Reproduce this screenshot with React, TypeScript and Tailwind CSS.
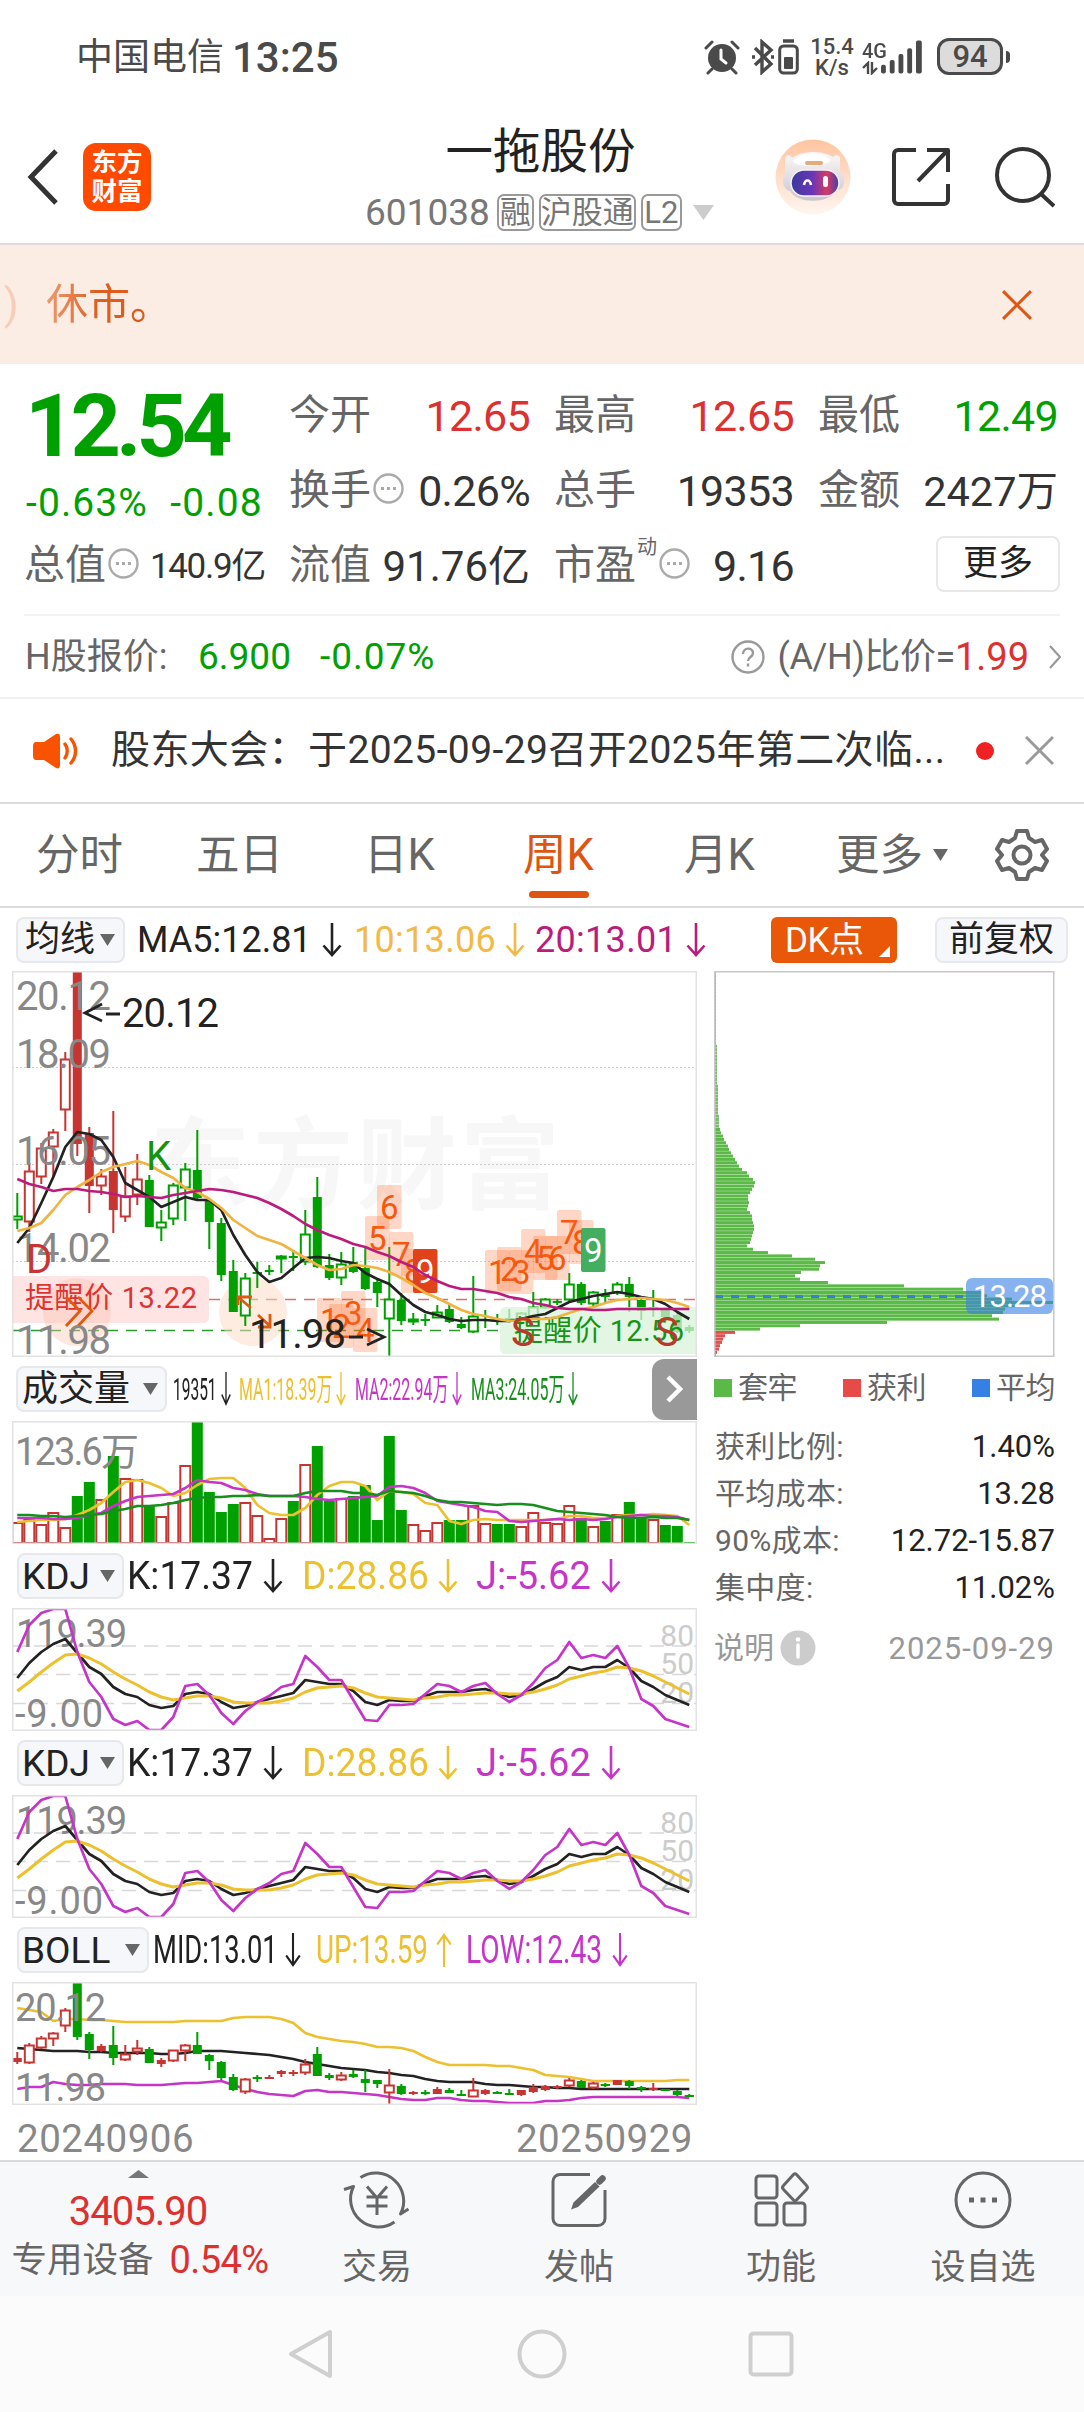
import type { ReactNode } from "react";
import clsx from "clsx";

// h = high, t = body top, b = body bottom, l = low (px from the top of the pane)
type Candle = [h: number, t: number, b: number, l: number, kind: "r" | "R" | "g" | "G"];

const RED = "#c73532";
const GREEN = "#00a000";
const UP = "#c435c8";
const GOLD = "#ecc02e";
const STEP = 12;
const PANE_W = 685;

const WEEKLY: Candle[] = [
  [222, 245, 249, 258, "g"], [192, 200, 251, 261, "r"], [172, 177, 206, 213, "r"], [158, 161, 176, 206, "r"],
  [81, 88, 139, 160, "r"], [0, 0, 173, 185, "R"], [156, 162, 215, 242, "R"], [198, 205, 215, 224, "r"],
  [140, 200, 239, 262, "R"], [196, 225, 246, 251, "r"], [183, 208, 224, 234, "r"], [204, 209, 256, 256, "G"],
  [239, 251, 257, 270, "g"], [212, 214, 248, 254, "g"], [192, 198, 217, 250, "g"], [159, 199, 227, 228, "G"],
  [227, 230, 251, 278, "G"], [247, 252, 304, 310, "G"], [289, 300, 341, 341, "G"], [302, 307, 345, 355, "g"],
  [291, 301, 302, 317, "G"], [294, 299, 301, 304, "G"], [284, 285, 288, 302, "g"], [279, 285, 287, 300, "G"],
  [239, 263, 291, 294, "g"], [206, 226, 296, 297, "G"], [283, 294, 307, 309, "G"], [281, 293, 307, 314, "g"],
  [276, 291, 301, 302, "G"], [276, 297, 318, 319, "G"], [308, 311, 322, 336, "G"], [276, 328, 348, 386, "g"],
  [322, 329, 350, 354, "G"], [342, 348, 351, 354, "g"], [343, 348, 349, 355, "G"], [334, 341, 347, 347, "g"],
  [334, 338, 351, 352, "G"], [346, 353, 357, 358, "G"], [305, 345, 361, 362, "g"], [339, 348, 350, 357, "G"],
  [343, 348, 349, 354, "G"], [338, 347, 349, 352, "G"], [341, 342, 352, 354, "g"], [321, 336, 346, 346, "g"],
  [327, 328, 337, 338, "g"], [328, 330, 331, 334, "G"], [302, 313, 329, 330, "g"], [311, 313, 332, 334, "G"],
  [320, 321, 333, 335, "g"], [318, 323, 326, 332, "G"], [311, 313, 322, 324, "g"], [306, 313, 326, 341, "G"],
  [327, 329, 340, 349, "G"], [319, 336, 337, 346, "G"], [337, 339, 346, 352, "G"], [342, 344, 361, 362, "G"],
  [354, 356, 360, 362, "G"],
];

const MA5 = [272, 257, 232, 206, 176, 161, 163, 169, 186, 212, 219, 226, 236, 231, 226, 229, 229, 239, 264, 284, 301, 311, 307, 297, 287, 286, 287, 290, 292, 302, 308, 313, 324, 334, 341, 344, 348, 350, 349, 349, 350, 350, 348, 345, 343, 337, 331, 328, 325, 323, 321, 323, 326, 328, 333, 341, 348];
const MA10 = [260, 257, 252, 239, 224, 216, 209, 201, 196, 193, 190, 194, 201, 207, 217, 221, 228, 237, 249, 257, 265, 269, 273, 280, 287, 294, 299, 298, 294, 295, 297, 301, 307, 314, 322, 327, 333, 339, 343, 345, 348, 350, 349, 348, 348, 346, 342, 338, 336, 332, 329, 328, 327, 328, 329, 332, 336];
const MA20 = [208, 213, 216, 220, 218, 218, 220, 221, 223, 226, 225, 226, 227, 224, 222, 220, 218, 219, 221, 224, 227, 232, 238, 245, 253, 259, 264, 268, 273, 276, 281, 285, 291, 296, 304, 310, 315, 318, 318, 320, 322, 326, 328, 332, 334, 337, 338, 338, 339, 339, 338, 338, 338, 338, 338, 338, 338];

// "r" is an up week drawn hollow, "G" a down week
const VOLUME =
  "101r 97r 103r 91r 106r 75G 61G 78r 35G 57r 58r 84G 95r 81r 44r 0G 71G 91G 83G 81r 94r 117r 97r 80G 43r 25G 80G 77r 75G 64G 99G 15G 89G 103r 109r 101r 99G 99G 84r 102r 103G 103G 105r 91r 101r 102r 84r 97G 105r 100G 93r 81G 97G 98r 104G 105G 121G".split(" ");
const VOL_MA1 = [101, 100, 99, 99, 98, 94, 89, 82, 71, 61, 59, 62, 67, 75, 72, 64, 58, 57, 57, 67, 84, 92, 94, 94, 87, 74, 65, 61, 61, 65, 79, 70, 71, 73, 82, 84, 100, 103, 99, 98, 99, 99, 99, 99, 99, 98, 95, 95, 97, 97, 95, 94, 94, 93, 94, 95, 104];
const VOL_MA2 = [97, 97, 97, 98, 98, 97, 94, 92, 85, 80, 76, 75, 74, 73, 67, 59, 61, 62, 67, 69, 73, 75, 75, 75, 76, 78, 79, 78, 77, 76, 75, 66, 65, 67, 72, 80, 82, 84, 86, 90, 91, 100, 101, 100, 99, 98, 99, 98, 99, 98, 96, 95, 94, 95, 95, 96, 99];
const VOL_MA3 = [94, 94, 95, 95, 96, 95, 94, 93, 90, 88, 85, 85, 84, 82, 79, 77, 76, 76, 75, 75, 74, 75, 75, 75, 72, 70, 70, 70, 72, 72, 74, 70, 71, 72, 75, 79, 81, 81, 82, 83, 84, 83, 83, 84, 87, 90, 91, 92, 93, 94, 96, 97, 97, 96, 97, 97, 99];

const KDJ_J = [44, 17, 5, 1, 1, 44, 74, 89, 111, 117, 113, 122, 122, 109, 78, 76, 87, 105, 116, 103, 94, 88, 79, 76, 48, 59, 72, 72, 92, 112, 113, 97, 97, 96, 86, 76, 78, 84, 78, 75, 86, 94, 87, 75, 60, 52, 34, 50, 47, 50, 38, 60, 91, 98, 111, 115, 119];
const KDJ_K = [70, 55, 44, 36, 31, 45, 59, 66, 79, 86, 89, 97, 100, 98, 86, 84, 86, 94, 100, 98, 94, 91, 88, 85, 72, 74, 76, 76, 83, 94, 97, 92, 93, 93, 88, 84, 84, 84, 82, 81, 85, 89, 87, 81, 74, 69, 59, 62, 59, 59, 52, 60, 73, 79, 87, 92, 97];
const KDJ_D = [83, 74, 64, 55, 47, 46, 50, 56, 64, 71, 77, 84, 89, 92, 90, 88, 88, 90, 94, 95, 95, 95, 93, 90, 84, 80, 79, 78, 80, 85, 89, 90, 91, 92, 90, 89, 87, 87, 86, 85, 85, 86, 86, 84, 81, 77, 71, 68, 65, 63, 59, 60, 63, 68, 74, 80, 86];

const BOLL: Candle[] = [
  [70, 76, 80, 82, "R"], [61, 63, 81, 82, "r"], [54, 56, 66, 67, "r"], [50, 51, 57, 64, "r"],
  [26, 28, 44, 50, "r"], [0, 0, 55, 58, "G"], [50, 52, 68, 77, "G"], [62, 64, 69, 70, "R"],
  [44, 63, 76, 83, "G"], [63, 72, 78, 79, "r"], [58, 66, 70, 73, "r"], [65, 67, 81, 81, "G"],
  [76, 78, 82, 85, "R"], [68, 68, 79, 80, "r"], [62, 63, 69, 79, "r"], [50, 63, 72, 72, "G"],
  [72, 73, 79, 88, "G"], [79, 80, 96, 98, "G"], [92, 95, 108, 109, "G"], [96, 97, 110, 112, "r"],
  [93, 95, 96, 100, "G"], [93, 95, 96, 97, "R"], [88, 89, 92, 95, "R"], [88, 90, 91, 94, "R"],
  [77, 82, 91, 93, "r"], [65, 72, 94, 94, "G"], [91, 93, 96, 98, "G"], [90, 93, 98, 99, "r"],
  [88, 92, 95, 96, "G"], [88, 97, 101, 110, "G"], [98, 98, 102, 106, "G"], [87, 103, 111, 123, "r"],
  [102, 104, 112, 113, "G"], [109, 110, 112, 113, "R"], [108, 110, 112, 113, "G"], [105, 107, 112, 112, "R"],
  [106, 108, 111, 111, "G"], [108, 112, 113, 113, "G"], [96, 108, 115, 115, "r"], [107, 108, 112, 113, "R"],
  [109, 110, 111, 111, "G"], [107, 111, 113, 113, "G"], [108, 108, 113, 114, "R"], [102, 105, 110, 111, "R"],
  [103, 104, 108, 109, "R"], [103, 104, 106, 107, "R"], [96, 98, 104, 105, "r"], [98, 99, 106, 106, "G"],
  [100, 101, 106, 107, "r"], [101, 102, 103, 105, "G"], [98, 98, 103, 103, "R"], [98, 99, 104, 107, "G"],
  [104, 105, 107, 110, "G"], [101, 106, 108, 109, "R"], [107, 107, 108, 109, "G"], [108, 109, 113, 114, "G"],
  [112, 113, 114, 115, "G"],
];
const BOLL_UP = [26, 28, 30, 39, 37, 37, 38, 38, 39, 40, 40, 40, 40, 40, 39, 39, 39, 39, 36, 35, 35, 35, 37, 41, 51, 55, 57, 59, 60, 62, 65, 65, 66, 69, 75, 80, 83, 83, 83, 83, 84, 84, 86, 88, 93, 94, 95, 97, 99, 99, 99, 99, 99, 99, 99, 98, 98];
const BOLL_MID = [66, 67, 68, 69, 69, 69, 70, 70, 71, 71, 71, 71, 72, 72, 71, 69, 69, 69, 70, 71, 72, 73, 75, 77, 80, 82, 84, 86, 87, 88, 90, 91, 93, 94, 97, 99, 100, 100, 100, 102, 103, 103, 104, 105, 105, 106, 106, 107, 107, 107, 107, 107, 107, 107, 107, 107, 107];
const BOLL_LOW = [107, 105, 105, 100, 102, 103, 103, 102, 102, 102, 103, 103, 103, 102, 101, 101, 100, 99, 103, 107, 110, 112, 113, 114, 109, 108, 110, 110, 111, 112, 113, 115, 117, 118, 118, 116, 116, 118, 119, 119, 120, 121, 121, 121, 119, 119, 118, 116, 115, 115, 115, 115, 115, 115, 115, 115, 116];

// Cost distribution, one width per price level from the top
const CHIPS = [
  ...Array(22).fill(1), ...Array(12).fill(2), ...Array(9).fill(3), 4, 4, 4, 4, 5,
  6, 8, 9, 11, 13, 14, 16, 18, 20, 22, 24, 27, 32, 34, 38, 40, 39, 37, 35, 33, 33, 34, 33, 32, 35, 37, 37,
  38, 39, 39, 38, 37, 36, 35, 32, 38, 53, 77, 100, 110, 105, 104, 86, 80, 85, 113, 189, 248, 267, 272, 297,
  339, 300, 290, 288, 277, 284, 172, 85, 45,
];
const CHIPS_WIN = [20, 10, 8, 7, 5, 4, 2, 1];

const TAGS: { n: string; x: number; y: number; solid?: string }[] = [
  { n: "1", x: 305, y: 327 }, { n: "2", x: 317, y: 333 }, { n: "3", x: 329, y: 320 }, { n: "4", x: 341, y: 337 },
  { n: "5", x: 353, y: 245 }, { n: "6", x: 365, y: 214 }, { n: "7", x: 377, y: 261 }, { n: "8", x: 389, y: 278 },
  { n: "9", x: 401, y: 278, solid: "#e2421b" },
  { n: "1", x: 473, y: 279 }, { n: "2", x: 485, y: 276 }, { n: "3", x: 497, y: 279 }, { n: "4", x: 509, y: 258 },
  { n: "5", x: 521, y: 265 }, { n: "6", x: 533, y: 265 }, { n: "7", x: 545, y: 239 }, { n: "8", x: 557, y: 249 },
  { n: "9", x: 569, y: 257, solid: "#43ae60" },
];

const cx = (i: number) => 5.3 + i * STEP;

function Line({ data, color, w = 2.7 }: { data: number[]; color: string; w?: number }) {
  return (
    <polyline
      points={data.map((y, i) => `${cx(i)},${y}`).join(" ")}
      fill="none"
      stroke={color}
      strokeWidth={w}
      strokeLinejoin="round"
    />
  );
}

function Candles({ data }: { data: Candle[] }) {
  return (
    <g>
      {data.map(([h, t, b, l, kind], i) => {
        const color = kind.toLowerCase() === "r" ? RED : GREEN;
        const hollow = kind === "r" || kind === "g";
        const x = cx(i);
        return (
          <g key={i} stroke={color} strokeWidth="2">
            <path d={`M${x} ${h}V${t}M${x} ${b}V${l}`} />
            {hollow ? (
              <rect x={x - 4.5} y={t + 0.5} width="9" height={Math.max(b - t - 1, 1.5)} fill="white" />
            ) : (
              <rect x={x - 4.5} y={t} width="9" height={Math.max(b - t, 1.5)} fill={color} stroke="none" />
            )}
            {!hollow && b - t < 2 && <path d={`M${x - 4.5} ${t + 1}h9`} />}
          </g>
        );
      })}
    </g>
  );
}

function Pane({ h, children }: { h: number; children: ReactNode }) {
  return (
    <svg
      width={PANE_W}
      height={h}
      viewBox={`0 0 ${PANE_W} ${h}`}
      className="ml-3 block shrink-0 font-[Roboto,'Noto_Sans_CJK_SC',sans-serif]"
    >
      {children}
      <rect x="0.75" y="0.75" width={PANE_W - 1.5} height={h - 1.5} fill="none" stroke="#e2e2e2" strokeWidth="1.5" />
    </svg>
  );
}

function AxisText({ x, y, w, fill = "#888", size = 40, children }: { x: number; y: number; w: number; fill?: string; size?: number; children: string }) {
  return (
    <text x={x} y={y} fontSize={size} textLength={w} fill={fill}>
      {children}
    </text>
  );
}

function Arrow({ up, className }: { up?: boolean; className?: string }) {
  return (
    <svg viewBox="0 0 20 34" preserveAspectRatio="none" className={clsx("h-[34px] shrink-0", up && "rotate-180", className)} fill="none" stroke="currentColor" strokeWidth="2.6">
      <path d="M10 0V32M1.5 22.5 10 32l8.5-9.5" />
    </svg>
  );
}

function Readout({ text, className, box, fit, arrow = "w-5", up }: { text: string; className: string; box: string; fit?: string; arrow?: string; up?: boolean }) {
  return (
    <div className={clsx("flex shrink-0 items-center", className)}>
      <div className={clsx("shrink-0 whitespace-nowrap", box)}>
        <div className={clsx("origin-left", fit)}>{text}</div>
      </div>
      <Arrow up={up} className={arrow} />
    </div>
  );
}

function Picker({ label, className }: { label: string; className: string }) {
  return (
    <div className={clsx("flex h-[46px] shrink-0 items-center justify-between rounded-lg border-2 border-[#e6e8ec] bg-[#f6f7fa] text-[#222]", className)}>
      <span className="whitespace-nowrap">{label}</span>
      <svg width="15" height="12" viewBox="0 0 15 12" className="shrink-0"><path d="M0 0h15L7.5 12z" fill="#666" /></svg>
    </div>
  );
}

function StatusBar() {
  return (
    <header className="flex h-[113px] items-center pr-[74px] pl-[76px] text-[#4a4a4a]">
      <span className="pt-[2px] text-[37px]">中国电信</span>
      <span className="ml-2 pt-[3px] text-[42px] font-medium">13:25</span>
      <div className="ml-auto flex items-center">
        <svg width="36" height="36" viewBox="0 0 36 36" fill="none" stroke="#4a4a4a" strokeWidth="3" strokeLinecap="round">
          <circle cx="18" cy="19" r="14" fill="#4a4a4a" stroke="none" />
          <path d="M2 9 8 3M34 9l-6-6M8 30l-4 4M28 30l4 4" />
          <path d="M17 11v9l5 4" stroke="white" />
        </svg>
        <svg width="22" height="36" viewBox="0 0 22 36" className="ml-[12px]" fill="none" stroke="#4a4a4a" strokeWidth="3.4">
          <path d="M3 9l16 16-9 8V3l9 8L3 26" />
          <path d="M0 18h3M19 18h3" />
        </svg>
        <svg width="21" height="36" viewBox="0 0 21 36" className="ml-[4px]">
          <path d="M5 2h11" stroke="#4a4a4a" strokeWidth="3.5" />
          <rect x="1.7" y="7" width="17.6" height="27" rx="4" fill="none" stroke="#4a4a4a" strokeWidth="3" />
          <rect x="6" y="18" width="9" height="12" rx="1" fill="#4a4a4a" />
        </svg>
        <div className="ml-[11px] flex w-[44px] flex-col items-center text-[22px] leading-[21px] font-medium">
          <span>15.4</span>
          <span>K/s</span>
        </div>
        <div className="ml-[8px] flex w-[62px] items-end">
          <div className="flex flex-col">
            <span className="origin-left scale-x-95 text-[21px] leading-[20px] font-medium">4G</span>
            <svg width="17" height="14" viewBox="0 0 17 14" fill="none" stroke="#4a4a4a" strokeWidth="2.4"><path d="M6 13V2L1 7M10 1v11l5-5" /></svg>
          </div>
          <svg width="44" height="36" viewBox="0 0 44 36" className="-ml-[7px]" fill="#4a4a4a">
            <rect x="0" y="26" width="5" height="9" rx="2" />
            <rect x="9" y="21" width="5" height="14" rx="2" />
            <rect x="18" y="15" width="5" height="20" rx="2" />
            <rect x="27" y="9" width="5" height="26" rx="2" />
            <rect x="36" y="1" width="6" height="34" rx="2" />
          </svg>
        </div>
        <div className="ml-[13px] flex h-[37px] w-[66px] items-center justify-center rounded-[12px] border-[3px] border-[#4a4a4a] bg-[#dcdcdc] text-[31px] leading-none font-medium">94</div>
        <div className="ml-[3px] h-3 w-1 rounded-r bg-[#4a4a4a]" />
      </div>
    </header>
  );
}

function Robot() {
  return (
    <svg width="76" height="76" viewBox="0 0 76 76">
      <defs>
        <linearGradient id="halo" x1="0" y1="0" x2="0" y2="1">
          <stop offset="0" stopColor="#ffc4a0" />
          <stop offset="1" stopColor="#fff6f0" />
        </linearGradient>
        <linearGradient id="shell" x1="0" y1="0" x2="0" y2="1">
          <stop offset="0" stopColor="#fdf8f7" />
          <stop offset="1" stopColor="#c9c5cf" />
        </linearGradient>
        <linearGradient id="visor">
          <stop offset="0" stopColor="#3a3a9c" />
          <stop offset="0.45" stopColor="#6a35b8" />
          <stop offset="0.75" stopColor="#d93a62" />
          <stop offset="1" stopColor="#3d3fb4" />
        </linearGradient>
      </defs>
      <circle cx="38" cy="38" r="37.5" fill="url(#halo)" />
      <path d="M10 19c2-4 5-3 7 0l5-3c10-4 23-4 32 0l4 2c3-3 6-2 7 1v13c5 4 6 14 1 18l-5 2c-7 13-39 13-46 0-7-1-9-13-5-18z" fill="url(#shell)" />
      <path d="M20 20c10-8 27-7 36 1-4 7-31 8-38 2z" fill="white" />
      <rect x="30" y="22" width="18" height="4" rx="2" fill="#e3aa7c" />
      <rect x="16" y="31" width="48" height="26" rx="13" fill="url(#visor)" stroke="#f5f2f5" strokeWidth="1.500" />
      <path d="M29 46c1-6 6-6 7 0" fill="none" stroke="white" strokeWidth="2.600" />
      <rect x="48" y="37" width="5" height="11" rx="2.500" fill="white" />
    </svg>
  );
}

function Badge({ children, className }: { children: ReactNode; className: string }) {
  return (
    <span className={clsx("flex h-[37px] items-center justify-center rounded-[7px] border-2 border-[#999] text-[31px] leading-none", className)}>
      {children}
    </span>
  );
}

function TitleBar() {
  return (
    <div className="flex h-[132px] items-center border-b-2 border-[#dcdcdc] pr-[29px] pl-[27px]">
      <div className="flex w-[339px] shrink-0 items-center pb-[2px]">
        <svg width="32" height="56" viewBox="0 0 32 56" fill="none" stroke="#333" strokeWidth="5"><path d="M29 2 4 28l25 26" /></svg>
        <div className="ml-6 flex h-[68px] w-[68px] flex-col items-center justify-center rounded-[13px] bg-[#ff4a00] text-[25.5px] leading-[29px] font-bold text-white">
          <span>东方</span>
          <span>财富</span>
        </div>
      </div>
      <div className="flex w-[349px] flex-col items-center self-start pt-[10px]">
        <h1 className="text-[47.5px] leading-[58px] text-[#222]">一拖股份</h1>
        <div className="flex h-[62px] w-full items-center text-[#777]">
          <span className="mr-[7px] -ml-[1px] text-[37px]">601038</span>
          <Badge className="w-[37px]">融</Badge>
          <Badge className="ml-[5px] w-[97px]">沪股通</Badge>
          <Badge className="ml-[5px] w-[41px]">L2</Badge>
          <svg width="21" height="15" viewBox="0 0 21 15" className="ml-[11px]"><path d="M0 0h21L10.500 15z" fill="#ccc" /></svg>
        </div>
      </div>
      <div className="ml-auto flex items-center pb-[2px]">
        <Robot />
        <svg width="58" height="60" viewBox="0 0 58 60" className="ml-[41px]" fill="none" stroke="#333" strokeWidth="4" strokeLinejoin="round">
          <path d="M24 3H6a4 4 0 0 0-4 4v46a4 4 0 0 0 4 4h46a4 4 0 0 0 4-4V37M35 3h21v22M55 4 26 34" />
        </svg>
        <svg width="60" height="62" viewBox="0 0 60 62" className="ml-[45px]" fill="none" stroke="#333" strokeWidth="4"><circle cx="28" cy="29" r="26" /><path d="m46 48 13 12" /></svg>
      </div>
    </div>
  );
}

function Cross({ size, color }: { size: number; color: string }) {
  return (
    <svg width={size} height={size} viewBox="0 0 28 28" stroke={color} strokeWidth="2.8"><path d="M1 1l26 26M27 1 1 27" /></svg>
  );
}

function MoreDots() {
  return (
    <svg width="31" height="31" viewBox="0 0 31 31" className="mx-[2px] mb-[5px] shrink-0" fill="none" stroke="#aaa" strokeWidth="2.4">
      <circle cx="15.500" cy="15.500" r="14" />
      <path d="M8 15.500h3M14 15.500h3M20 15.500h3" strokeWidth="3" />
    </svg>
  );
}

function Stat({ label, value, tone = "text-[#333]", dots, className }: { label: ReactNode; value: string; tone?: string; dots?: boolean; className?: string }) {
  return (
    <div className="flex items-center whitespace-nowrap">
      <span className="flex items-center text-[41px] text-[#666]">{label}</span>
      {dots && <MoreDots />}
      <span className={clsx("-mr-[2px] ml-auto pt-[2px]", tone, className ?? "text-[43px] tracking-[-0.7px]")}>{value}</span>
    </div>
  );
}

function Quote() {
  return (
    <section className="h-[335px] border-b-2 border-[#f0f0f0]">
      <div className="grid h-[250px] grid-cols-[237px_239px_238px_238px] grid-rows-[75px_75px_75px] gap-x-[26px] pt-[14px] pl-[26px] leading-none">
        <div className="row-span-2 text-[#00a000]">
          <div className="-ml-[1px] pt-[2px] text-[88px] leading-[92px] font-bold tracking-[-5px]">12.54</div>
          <div className="flex justify-between pt-[12px] text-[39px]">
            <span className="tracking-[1.1px]">-0.63%</span>
            <span className="tracking-[1.2px]">-0.08</span>
          </div>
        </div>
        <Stat label="今开" value="12.65" tone="text-[#dd3030]" />
        <Stat label="最高" value="12.65" tone="text-[#dd3030]" />
        <Stat label="最低" value="12.49" tone="text-[#00a000]" />
        <Stat label="换手" value="0.26%" dots />
        <Stat label="总手" value="19353" />
        <Stat label="金额" value="2427万" className="text-[41.500px]" />
        <Stat label={<span className="-ml-[2px]">总值</span>} value="140.9亿" dots className="text-[35px] tracking-[-1.3px]" />
        <Stat label="流值" value="91.76亿" className="text-[42px]" />
        <Stat label={<>市盈<span className="ml-[1px] self-start text-[20px] leading-[4px]">动</span></>} value="9.16" dots />
        <div className="-mr-1 flex items-center justify-end pb-1">
          <button className="h-[56px] w-[124px] rounded-lg border-2 border-[#e8e8e8] text-[35px] leading-none text-[#222]">更多</button>
        </div>
      </div>
      <div className="mx-6 h-[2px] bg-[#f3f3f3]" />
      <div className="flex h-[81px] items-center pr-[23px] pl-[25px] text-[36px] text-[#666]">
        <span className="w-[173px]">H股报价:</span>
        <span className="w-[122px] text-[37px] text-[#00a000]">6.900</span>
        <span className="text-[37px] tracking-[1px] text-[#00a000]">-0.07%</span>
        <svg width="34" height="34" viewBox="0 0 34 34" className="ml-auto" fill="none" stroke="#999" strokeWidth="2.4">
          <circle cx="17" cy="17" r="15.500" />
          <path d="M12 14c0-7 10-7 10-1 0 4-5 4-5 8M17 23.500v3" />
        </svg>
        <span className="ml-3 tracking-[-0.4px]">(A/H)比价=</span>
        <span className="text-[38px] text-[#dd3030]">1.99</span>
        <svg width="12" height="24" viewBox="0 0 12 24" className="ml-5" fill="none" stroke="#999" strokeWidth="2.2"><path d="m1 1 10 11L1 23" /></svg>
      </div>
    </section>
  );
}

function Notice() {
  return (
    <div className="flex h-[105px] items-center border-b-2 border-[#dcdcdc] pr-[30px] pl-[33px] text-[39px] text-[#333]">
      <svg width="46" height="38" viewBox="0 0 46 38" fill="none" stroke="#f95200" strokeWidth="3.4" strokeLinecap="round">
        <path d="M3 10h8L23 2c3-1 4 0 4 3v28c0 3-1 4-4 3l-12-8H3c-2 0-3-2-3-4V14c0-2 1-4 3-4z" fill="#f95200" stroke="none" />
        <path d="M32 12c3 4 3 10 0 14M38 7c6 7 6 17 0 24" />
      </svg>
      <span className="ml-8 w-[840px] tracking-[0.4px] whitespace-nowrap">股东大会：于2025-09-29召开2025年第二次临...</span>
      <span className="ml-auto h-[18px] w-[18px] rounded-full bg-[#ee2222]" />
      <span className="ml-[31px]"><Cross size={29} color="#999" /></span>
    </div>
  );
}

const PERIODS = [
  { label: "分时", w: "w-[160px]" },
  { label: "五日", w: "w-[168px]" },
  { label: "日K", w: "w-[159px]" },
  { label: "周K", w: "w-[161px]" },
  { label: "月K", w: "w-[152px]" },
];

function PeriodTabs() {
  return (
    <nav className="flex h-[104px] items-center border-b-2 border-[#dcdcdc] pl-[36px] text-[43.5px] text-[#666]">
      {PERIODS.map((p) => (
        <div key={p.label} className={clsx("relative flex h-full shrink-0 items-center pt-[2px]", p.w, p.label === "周K" && "text-[#dd5511]")}>
          {p.label}
          {p.label === "周K" && <span className="absolute bottom-[8px] left-[6px] h-[7px] w-[60px] rounded-full bg-[#dd5511]" />}
        </div>
      ))}
      <span className="pt-[2px]">更多</span>
      <svg width="15" height="12" viewBox="0 0 15 12" className="ml-[10px]"><path d="M0 0h15L7.500 12z" fill="#666" /></svg>
      <svg width="54" height="54" viewBox="0 0 54 54" className="ml-[47px]" fill="none" stroke="#666" strokeWidth="4" strokeLinejoin="round">
        <path d="M22 3h10l2 7 6 4 7-2 5 9-5 6 5 6-5 9-7-2-6 4-2 7H22l-2-7-6-4-7 2-5-9 5-6-5-6 5-9 7 2 6-4z" />
        <circle cx="27" cy="27" r="8.500" />
      </svg>
    </nav>
  );
}

function MainChart() {
  return (
    <Pane h={386}>
      <text x="138" y="230" fontSize="100" fontWeight="700" textLength="410" fill="#f7f7f7">东方财富</text>
      <path d="M0 96.500h685M0 193.500h685M0 290.500h685" stroke="#ccc" strokeDasharray="2 2" />
      <path d="M197 328.500h488" stroke="#d97070" strokeWidth="1.6" strokeDasharray="11 8" />
      <path d="M0 359.500h488" stroke="#2f9a2f" strokeWidth="1.6" strokeDasharray="11 8" />
      <path d="M-10 305h201q6 0 6 6v35q0 6-6 6H-10z" fill="#ffe4e4" />
      <circle cx="65" cy="341" r="34" fill="#fbc4ae" opacity="0.4" />
      <circle cx="241" cy="341" r="34" fill="#fdd9c4" opacity="0.5" />
      <Candles data={WEEKLY} />
      <AxisText x={13} y={337} w={172} size={29} fill="#dd3333">提醒价 13.22</AxisText>
      <g fill="none" stroke="#e0590f" strokeWidth="2.800">
        <path d="m54 326 14 14-14 15M66 326l14 14-14 15" />
        <path d="M239 337l-13-11M226 334v-8h14M246 344l12 11M258 343v13h-12" />
      </g>
      <AxisText x={4} y={39} w={95}>20.12</AxisText>
      <AxisText x={4} y={97} w={95}>18.09</AxisText>
      <AxisText x={4} y={194} w={95}>16.05</AxisText>
      <AxisText x={4} y={291} w={95}>14.02</AxisText>
      <AxisText x={4} y={383} w={95}>11.98</AxisText>
      {TAGS.map((t, i) => (
        <g key={i}>
          <rect x={t.x} y={t.y} width="24.500" height="44" rx="2" fill={t.solid ?? "#ff6a2c"} opacity={t.solid ? 1 : 0.27} />
          <text x={t.x + 12.2} y={t.y + 34} fontSize="33" textAnchor="middle" fill={t.solid ? "white" : "#f4580c"}>{t.n}</text>
        </g>
      ))}
      <path d="M494 336h191v47H494q-6 0-6-6v-35q0-6 6-6z" fill="#d9f2d9" opacity="0.75" />
      <AxisText x={502} y={370} w={170} size={29} fill="#159515">提醒价 12.56</AxisText>
      <Line data={MA5} color="#222" />
      <Line data={MA10} color="#f0b442" />
      <Line data={MA20} color="#bb1c7c" />
      <path d="m90 33-17 9 17 8M94 43h14" fill="none" stroke="#222" strokeWidth="2.800" />
      <AxisText x={110} y={56} w={97} fill="#222">20.12</AxisText>
      <AxisText x={237} y={377} w={97} fill="#222">11.98</AxisText>
      <path d="M337 366h14M355 358l17 8-17 8" fill="none" stroke="#222" strokeWidth="2.800" />
      <text x="134" y="199" fontSize="40" fill="#12940f">K</text>
      <text x="14" y="302" fontSize="40" fill="#c73532">D</text>
      <text x="499" y="375" fontSize="40" fill="#b93a2c">S</text>
      <text x="643" y="375" fontSize="40" fill="#b93a2c">S</text>
    </Pane>
  );
}

function VolumeChart() {
  return (
    <Pane h={123}>
      {VOLUME.map((v, i) => {
        const y = parseInt(v, 10);
        return v.endsWith("G") ? (
          <rect key={i} x={cx(i) - 5.5} y={y} width="11" height={122 - y} fill={GREEN} />
        ) : (
          <rect key={i} x={cx(i) - 5} y={y + 1} width="10" height={121 - y} fill="white" stroke={RED} strokeWidth="2" />
        );
      })}
      <Line data={VOL_MA1} color={GOLD} />
      <Line data={VOL_MA2} color={UP} />
      <Line data={VOL_MA3} color="#178f1c" />
      <AxisText x={3} y={44} w={124} size={38}>123.6万</AxisText>
    </Pane>
  );
}

function KdjChart() {
  return (
    <Pane h={123}>
      <path d="M0 38h685M0 66.500h685M0 95.500h685" stroke="#d8d8d8" strokeWidth="1.5" strokeDasharray="14 8" />
      <text x="682" y="38" fontSize="30" textAnchor="end" fill="#ccc">80</text>
      <text x="682" y="66" fontSize="30" textAnchor="end" fill="#ccc">50</text>
      <text x="682" y="95" fontSize="30" textAnchor="end" fill="#ccc">20</text>
      <AxisText x={4} y={39} w={111} size={38}>119.39</AxisText>
      <AxisText x={3} y={119} w={88} size={38}>-9.00</AxisText>
      <Line data={KDJ_K} color="#222" />
      <Line data={KDJ_D} color={GOLD} w={3} />
      <Line data={KDJ_J} color={UP} />
    </Pane>
  );
}

function BollChart() {
  return (
    <Pane h={123}>
      <Line data={BOLL_UP} color={GOLD} />
      <Line data={BOLL_MID} color="#222" />
      <Line data={BOLL_LOW} color={UP} />
      <Candles data={BOLL} />
      <AxisText x={3} y={39} w={91} size={38}>20.12</AxisText>
      <AxisText x={3} y={119} w={91} size={38}>11.98</AxisText>
    </Pane>
  );
}

function KdjHeader() {
  return (
    <div className="flex h-[64px] items-center pl-[17px] text-[38px]">
      <Picker label="KDJ" className="w-[107px] pr-[7px] pl-[3px] text-[37px]" />
      <Readout text="K:17.37" className="ml-[3px] text-[#222]" box="w-[136px]" fit="scale-x-98" />
      <Readout text="D:28.86" className="ml-[19px] text-[#ecc02e]" box="w-[136px]" fit="scale-x-98" />
      <Readout text="J:-5.62" className="ml-[18px] text-[#c435c8]" box="w-[125px]" />
    </div>
  );
}

function ChipPanel() {
  return (
    <aside className="ml-[17px] w-[341px] text-[30px] leading-none text-[#666]">
      <svg width="341" height="386" viewBox="0 0 341 386" className="block font-[Roboto,sans-serif]">
        {CHIPS.map((w, i) => (
          <rect key={i} x="1" y={0.6 + i * 3.327} width={w} height="3" fill={w < 5 ? "#7fb873" : "#5bb947"} />
        ))}
        {CHIPS_WIN.map((w, i) => (
          <rect key={i} x="1" y={359.9 + i * 3.327} width={w} height="3" fill="#e05050" />
        ))}
        <path d="M1 325.500h252" stroke="#3580d5" strokeWidth="3" strokeDasharray="8 8" />
        <rect x="0.75" y="0.75" width="339" height="384.500" fill="none" stroke="#c8c8c8" strokeWidth="1.5" />
        <rect x="252" y="307" width="87" height="36" rx="6" fill="#3580e5" opacity="0.6" />
        <text x="259" y="336" fontSize="31" textLength="74" fill="white">13.28</text>
      </svg>
      <div className="mt-[13px] flex h-[36px] items-center justify-between">
        <Legend label="套牢" dot="bg-[#5bb947]" />
        <Legend label="获利" dot="bg-[#e84a48]" />
        <Legend label="平均" dot="bg-[#3580e5]" />
      </div>
      <dl className="mt-[17px]">
        <ChipRow label="获利比例:" value="1.40%" />
        <ChipRow label="平均成本:" value="13.28" />
        <ChipRow label="90%成本:" value="12.72-15.87" />
        <ChipRow label="集中度:" value="11.02%" />
      </dl>
      <div className="mt-[12px] flex h-[50px] items-center text-[#999]">
        <span>说明</span>
        <svg width="36" height="36" viewBox="0 0 36 36" className="ml-[6px]">
          <circle cx="18" cy="18" r="17.500" fill="#ccc" />
          <path d="M18 15v12" stroke="white" strokeWidth="3.500" strokeLinecap="round" />
          <circle cx="18" cy="9.500" r="2.300" fill="white" />
        </svg>
        <span className="ml-auto text-[31px] tracking-[1px]">2025-09-29</span>
      </div>
    </aside>
  );
}

function Legend({ label, dot }: { label: string; dot: string }) {
  return (
    <span className="flex items-center">
      <i className={clsx("mr-[6px] h-[18px] w-[18px]", dot)} />
      <span className="tracking-[-0.5px]">{label}</span>
    </span>
  );
}

function ChipRow({ label, value }: { label: string; value: string }) {
  return (
    <div className="flex h-[47px] items-center justify-between">
      <dt className="pl-[1px] tracking-[0.3px]">{label}</dt>
      <dd className="text-[31px] text-[#222]">{value}</dd>
    </div>
  );
}

function Charts() {
  return (
    <main className="flex h-[1252px] flex-col">
      <div className="flex h-[63px] shrink-0 items-center px-4 text-[36px]">
        <Picker label="均线" className="w-[109px] pr-[8px] pl-[7px] text-[35px]" />
        <Readout text="MA5:12.81" className="ml-[12px] text-[#222]" box="w-[185px]" />
        <Readout text="10:13.06" className="ml-[12px] text-[#f3b947]" box="w-[151px]" fit="tracking-[0.3px]" />
        <Readout text="20:13.01" className="ml-[10px] text-[#bb1c7c]" box="w-[151px]" fit="tracking-[0.3px]" />
        <div className="ml-[65px] flex h-[46px] w-[126px] shrink-0 items-end justify-between rounded-md bg-[#e85808] pl-[14px] text-[35px] leading-[44px] text-white">
          <span className="tracking-[-0.5px]">DK点</span>
          <svg width="11" height="11" viewBox="0 0 11 11" className="mr-[7px] mb-[6px]"><path d="M11 0v11H0z" fill="white" /></svg>
        </div>
        <div className="ml-auto flex h-[46px] w-[133px] shrink-0 items-center justify-center rounded-lg border-2 border-[#e6e8ec] bg-[#f6f7fa] text-[35px] text-[#222]">前复权</div>
      </div>
      <div className="flex">
        <div className="w-[697px] shrink-0 leading-none">
          <MainChart />
          <div className="flex h-[64px] items-center pl-[16px] text-[31px]">
            <Picker label="成交量" className="w-[151px] pr-[7px] pl-[4px] text-[36px]" />
            <Readout text="19351" className="ml-[6px] text-[#222]" box="w-[48px]" fit="scale-x-50" arrow="w-[10px]" />
            <Readout text="MA1:18.39万" className="ml-[8px] text-[#ecc02e]" box="w-[97px]" fit="scale-x-[0.515]" arrow="w-[10px]" />
            <Readout text="MA2:22.94万" className="ml-[9px] text-[#c435c8]" box="w-[97px]" fit="scale-x-[0.515]" arrow="w-[10px]" />
            <Readout text="MA3:24.05万" className="ml-[9px] text-[#178f1c]" box="w-[97px]" fit="scale-x-[0.515]" arrow="w-[10px]" />
            <div className="ml-auto flex h-[61px] w-[45px] items-center justify-center rounded-l-xl bg-[#999]">
              <svg width="17" height="28" viewBox="0 0 17 28" fill="none" stroke="white" strokeWidth="4.500"><path d="m2 2 12 12L2 26" /></svg>
            </div>
          </div>
          <VolumeChart />
          <KdjHeader />
          <KdjChart />
          <KdjHeader />
          <KdjChart />
          <div className="flex h-[64px] items-center pl-[17px] text-[38px]">
            <Picker label="BOLL" className="w-[132px] pr-[7px] pl-[3px] text-[37px]" />
            <Readout text="MID:13.01" className="ml-[4px] text-[#222]" box="w-[132px]" fit="scale-x-72" arrow="w-4" />
            <Readout text="UP:13.59" className="ml-[15px] text-[#ecc02e]" box="w-[120px]" fit="scale-x-73" arrow="w-4" up />
            <Readout text="LOW:12.43" className="ml-[14px] text-[#c435c8]" box="w-[146px]" fit="scale-x-74" arrow="w-4" />
          </div>
          <BollChart />
          <div className="flex h-[64px] items-center justify-between pt-[4px] pr-[4px] pl-[17px] text-[38.5px] tracking-[0.5px] text-[#888]">
            <span>20240906</span>
            <span>20250929</span>
          </div>
        </div>
        <ChipPanel />
      </div>
    </main>
  );
}

function Action({ label, children }: { label: string; children: ReactNode }) {
  return (
    <div className="flex w-[202px] flex-col items-center pt-[8px]">
      <svg width="64" height="60" viewBox="0 0 64 60" className="overflow-visible" fill="none" stroke="#666" strokeWidth="3" strokeLinejoin="round">{children}</svg>
      <span className="mt-[16px] text-[35px] leading-[44px]">{label}</span>
    </div>
  );
}

function BottomBar() {
  return (
    <footer className="flex h-[136px] border-t-2 border-[#d9d9d9] bg-[#f7f8fa] text-[#666]">
      <div className="flex w-[276px] shrink-0 flex-col items-center pt-[8px] leading-none">
        <svg width="21" height="8" viewBox="0 0 21 8"><path d="M0 8h21L10.500 0z" fill="#777" /></svg>
        <span className="mt-[14px] text-[40px] tracking-[-1px] text-[#dd3030]">3405.90</span>
        <div className="mt-[6px] flex items-center pl-1">
          <span className="text-[35.5px] leading-[44px]">专用设备</span>
          <span className="ml-[16px] text-[38px] tracking-[-0.6px] text-[#dd3030]">0.54%</span>
        </div>
      </div>
      <Action label="交易">
        <path d="M15.500 7.500A28 28 0 0 1 55.500 44l8-5M-1 19.500l9.500-3A28 28 0 0 0 49.500 52" />
        <path d="m22 16.500 10 11.500 10-11.500M32 28v17M21.500 27h21M21.500 36h21" />
      </Action>
      <Action label="发帖">
        <path d="M43 4.500H13a7 7 0 0 0-7 7v37a7 7 0 0 0 7 7h38a7 7 0 0 0 7-7V20" />
        <path d="m48 12 4.500 4.500L31 37l-7 2.500 2.500-7z" fill="#666" stroke="none" />
        <path d="m52.500 11.500 3-3" strokeWidth="6.500" strokeLinecap="round" />
      </Action>
      <Action label="功能">
        <rect x="7" y="6" width="21" height="22" rx="3" />
        <rect x="7" y="33" width="21" height="22" rx="3" />
        <rect x="35" y="33" width="21" height="22" rx="3" />
        <path d="M44.500 4.500q1.500-1.500 3 0L57.500 15.500q2 2 0 4L47.500 30q-1.500 1.500-3 0L34.500 19.500q-2-2 0-4z" />
      </Action>
      <Action label="设自选">
        <circle cx="32" cy="30" r="27" />
        <path d="M18 30h5M29.500 30h5M41 30h5" strokeWidth="5" />
      </Action>
    </footer>
  );
}

export default function App() {
  return (
    <div className="flex h-[2412px] w-[1084px] flex-col overflow-hidden bg-white font-[Roboto,'Noto_Sans_CJK_SC',sans-serif] leading-none">
      <StatusBar />
      <TitleBar />
      <div className="flex h-[119px] items-center bg-[#fcede4] pr-[52px] text-[42px]">
        <span className="w-[46px] pl-[4px] text-[#f6cdb6]">)</span>
        <span className="bg-gradient-to-r from-[#ee9a6c] via-[#dd5f22] via-40% to-[#dd5511] bg-clip-text leading-[56px] text-transparent">休市。</span>
        <span className="ml-auto"><Cross size={30} color="#dd5511" /></span>
      </div>
      <Quote />
      <Notice />
      <PeriodTabs />
      <Charts />
      <BottomBar />
      <div className="flex h-[116px] items-center bg-[#fbfbfb] pl-[288px]">
        <svg width="46" height="50" viewBox="0 0 46 50" fill="none" stroke="#cfcfcf" strokeWidth="4" strokeLinejoin="round"><path d="M42 3v44L3 25z" /></svg>
        <svg width="50" height="50" viewBox="0 0 50 50" className="ml-[183px]" fill="none" stroke="#cfcfcf" strokeWidth="4"><circle cx="25" cy="25" r="22.500" /></svg>
        <svg width="46" height="46" viewBox="0 0 46 46" className="ml-[181px]" fill="none" stroke="#cfcfcf" strokeWidth="4"><rect x="2.500" y="2.500" width="41" height="41" rx="3" /></svg>
      </div>
    </div>
  );
}
